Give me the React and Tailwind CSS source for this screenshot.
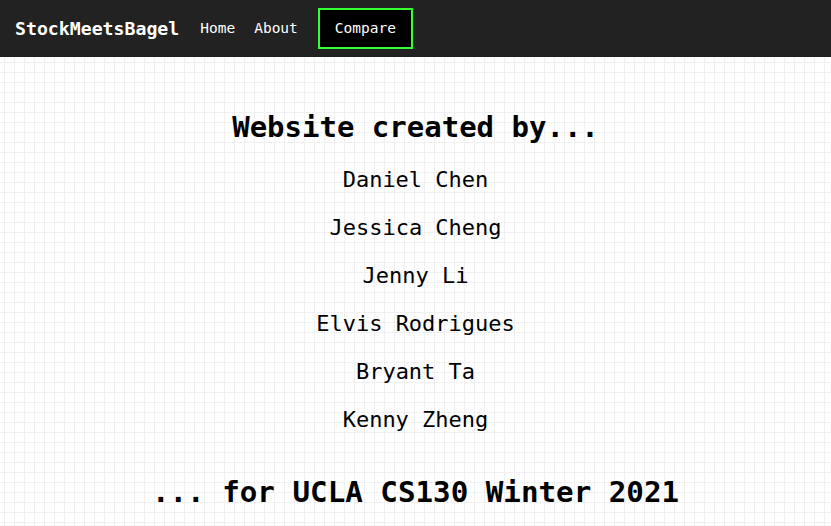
export default function App() {
  const names = ["Daniel Chen", "Jessica Cheng", "Jenny Li", "Elvis Rodrigues", "Bryant Ta", "Kenny Zheng"];
  const mono = "font-['DejaVu_Sans_Mono','Liberation_Mono',monospace]";
  return (
    <div className={`min-h-screen flex flex-col bg-white ${mono}`}>
      <nav className="h-[57px] bg-[#222222] flex items-center pl-[15px] text-white">
        <span className="font-bold text-[18.2px]">StockMeetsBagel</span>
        <a className="ml-[21px] text-[14.5px]">Home</a>
        <a className="ml-[19px] text-[14.5px]">About</a>
        <a className="ml-[20px] h-[41px] px-[15px] flex items-center border-2 border-[#33ff33] bg-black text-[14.5px]">Compare</a>
      </nav>
      <main className="flex-1 flex flex-col items-center text-black bg-[linear-gradient(to_right,#f0f0f0_1px,transparent_1px),linear-gradient(to_bottom,#f0f0f0_1px,transparent_1px)] bg-[size:10px_10px] bg-[position:4px_5px]">
        <h1 className="mt-[53px] font-bold text-[29px] leading-[35px]">Website created by...</h1>
        <div className="mt-[11px] flex flex-col items-center">
          {names.map((n) => (
            <div key={n} className="text-[22px] leading-[48px]">{n}</div>
          ))}
        </div>
        <h1 className="mt-[31px] font-bold text-[29.2px] leading-[35px]">... for UCLA CS130 Winter 2021</h1>
      </main>
    </div>
  );
}
